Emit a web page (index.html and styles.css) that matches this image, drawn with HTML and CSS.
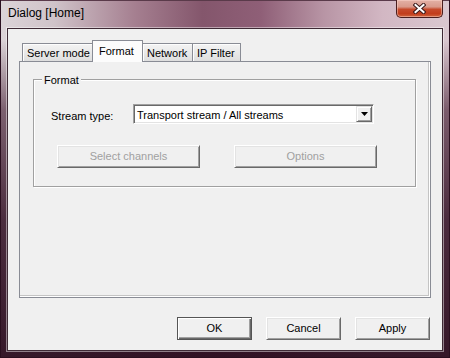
FILE: index.html
```html
<!DOCTYPE html>
<html>
<head>
<meta charset="utf-8">
<title>Dialog [Home]</title>
<link rel="stylesheet" href="styles.css">
</head>
<body>
<div class="window">
  <div class="titlebar">
    <span class="title">Dialog [Home]</span>
    <div class="close">
      <svg width="13" height="11" viewBox="0 0 13 11">
        <path d="M2.5 2 L10.5 9 M10.5 2 L2.5 9" stroke="#3b1b1b" stroke-width="4" stroke-linecap="square" fill="none"/>
        <path d="M2.5 2 L10.5 9 M10.5 2 L2.5 9" stroke="#ffffff" stroke-width="2" stroke-linecap="square" fill="none"/>
      </svg>
    </div>
  </div>
  <div class="client">
    <div class="tabs">
      <div class="tab tab-server">Server mode</div>
      <div class="tab tab-sel">Format</div>
      <div class="tab tab-net">Network</div>
      <div class="tab tab-ip">IP Filter</div>
    </div>
    <div class="panel">
      <div class="group">
        <div class="group-label">Format</div>
        <div class="row">
          <div class="field-label">Stream type:</div>
          <div class="combo">
            <span class="combo-text">Transport stream / All streams</span>
            <span class="combo-btn">
              <svg width="7" height="4" viewBox="0 0 7 4"><path d="M0 0H7L3.5 4Z" fill="#000"/></svg>
            </span>
          </div>
        </div>
        <div class="row-btns">
          <div class="btn btn-wide disabled">Select channels</div>
          <div class="btn btn-wide disabled">Options</div>
        </div>
      </div>
    </div>
    <div class="actions">
      <div class="btn btn-default">OK</div>
      <div class="btn">Cancel</div>
      <div class="btn">Apply</div>
    </div>
  </div>
</div>
</body>
</html>
```
FILE: styles.css
```css
html, body {
  margin: 0;
  padding: 0;
  background: #3a1a2c;
}
.window {
  width: 450px;
  height: 358px;
  display: flex;
  flex-direction: column;
  box-sizing: border-box;
  font-family: "Liberation Sans", Arial, sans-serif;
  font-size: 11px;
  line-height: 13px;
  color: #000;
  background:
    linear-gradient(180deg, rgba(45,12,32,0) 0px, rgba(45,12,32,0) 40px, rgba(60,20,42,0.6) 110px, rgba(50,16,36,0.85) 220px, rgba(45,14,32,0.95) 100%),
    linear-gradient(90deg, #dcd4d8 0%, #d0c3c9 12%, #a57f90 30%, #84566c 45%, #8f5f77 58%, #b895a5 72%, #d2b7c3 85%, #dac8d0 100%);
  box-shadow: inset 1px 0 #2a0f1f, inset -1px 0 #2a0f1f, inset 0 -1px #2a0f1f, inset 0 1px #5a3a4a;
}
.titlebar {
  height: 28px;
  flex: 0 0 28px;
  display: flex;
  align-items: flex-start;
}
.title {
  font-size: 12px;
  line-height: 14px;
  padding: 6px 0 0 8px;
  color: #000;
}
.close {
  margin-left: auto;
  margin-right: 7px;
  width: 47px;
  height: 18px;
  box-sizing: border-box;
  border: 1px solid #4a1e1e;
  border-top: none;
  border-radius: 0 0 5px 5px;
  background: linear-gradient(180deg, #e3b1a6 0%, #d99a8b 40%, #c64a2c 55%, #c23d1c 80%, #d0653e 100%);
  box-shadow: inset 0 0 0 1px rgba(255,220,210,0.45);
  display: flex;
  align-items: center;
  justify-content: center;
}
.client {
  flex: 1;
  margin: 0 7px 7px;
  border: 1px solid #3e2a35;
  box-shadow: 0 0 0 1px rgba(255,255,255,0.45);
  background: #f0f0f0;
  padding: 11px 11px 0;
  display: flex;
  flex-direction: column;
}
.tabs {
  display: flex;
  align-items: flex-end;
  padding-left: 3px;
  height: 21px;
}
.tab {
  box-sizing: border-box;
  height: 18px;
  border: 1px solid #898c95;
  border-bottom: none;
  background: linear-gradient(180deg, #f4f4f4 0%, #e9e9e9 50%, #dedede 100%);
  box-shadow: inset 1px 1px #fdfdfd;
  padding: 3px 0 0 4px;
  white-space: nowrap;
}
.tab-server { width: 71px; }
.tab-net { width: 51px; margin-left: -1px; }
.tab-ip { width: 49px; margin-left: -1px; }
.tab-sel {
  width: 51px;
  margin-left: -1px;
  height: 22px;
  margin-bottom: -1px;
  padding: 4px 0 0 6px;
  background: #fcfcfc;
  box-shadow: none;
  position: relative;
  z-index: 2;
}
.panel {
  box-sizing: border-box;
  height: 237px;
  border: 1px solid #898c95;
  box-shadow: inset -1px -1px #ffffff, inset -2px -2px #c4c4c4;
  background: #f0f0f0;
  padding-top: 17px;
}
.group {
  margin: 0 14px 0 13px;
  border: 1px solid #a0a0a0;
  box-shadow: inset 1px 1px #ffffff, 1px 1px #ffffff;
  padding-bottom: 18px;
}
.group-label {
  width: fit-content;
  margin: -6px 0 0 8px;
  padding: 0 2px;
  background: #f0f0f0;
}
.row {
  display: flex;
  align-items: flex-start;
  margin-top: 17px;
  padding-left: 17px;
}
.field-label {
  width: 82px;
  margin-top: 6px;
}
.combo {
  box-sizing: border-box;
  width: 241px;
  height: 20px;
  border: 1px solid;
  border-color: #a0a0a0 #ffffff #ffffff #a0a0a0;
  box-shadow: inset 1px 1px #696969, inset -1px -1px #e3e3e3;
  background: #fff;
  padding: 1px;
  display: flex;
}
.combo-text {
  padding: 3px 0 0 2px;
  white-space: nowrap;
}
.combo-btn {
  margin-left: auto;
  box-sizing: border-box;
  width: 16px;
  height: 16px;
  background: #f0f0f0;
  border: 1px solid;
  border-color: #e3e3e3 #696969 #696969 #e3e3e3;
  box-shadow: inset 1px 1px #ffffff, inset -1px -1px #a0a0a0;
  display: flex;
  align-items: center;
  justify-content: center;
}
.combo-btn svg { display: block; margin-left: 1px; }
.row-btns {
  display: flex;
  gap: 34px;
  margin-top: 21px;
  padding-left: 23px;
}
.btn {
  box-sizing: border-box;
  width: 75px;
  height: 23px;
  border: 1px solid;
  border-color: #ffffff #696969 #696969 #ffffff;
  box-shadow: inset 1px 1px #e3e3e3, inset -1px -1px #a0a0a0;
  background: #f0f0f0;
  display: flex;
  align-items: center;
  justify-content: center;
  color: #000;
}
.btn-wide { width: 143px; }
.disabled { color: #a0a0a0; }
.btn-default {
  border-color: #555555;
  box-shadow: inset 1px 1px #ffffff, inset -1px -1px #696969, inset -2px -2px #a0a0a0;
}
.actions {
  display: flex;
  justify-content: flex-end;
  gap: 14px;
  margin-top: 19px;
  padding-right: 1px;
}
```
